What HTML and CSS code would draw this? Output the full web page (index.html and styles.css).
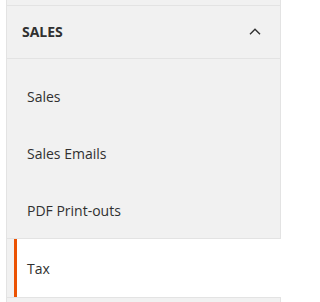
FILE: index.html
```html
<!DOCTYPE html>
<html lang="en">
<head>
<meta charset="utf-8">
<title>Sales nav</title>
<link rel="stylesheet" href="styles.css">
</head>
<body>
<nav class="nav">
  <div class="prev"></div>
  <div class="section-title">
    <span class="title-text">SALES</span>
    <svg class="chevron" width="12" height="7" viewBox="0 0 12 7" aria-hidden="true"><polyline points="1,6.2 6,1.2 11,6.2" fill="none" stroke="#303030" stroke-width="1.4"/></svg>
  </div>
  <ul class="items">
    <li class="item">Sales</li>
    <li class="item">Sales Emails</li>
    <li class="item">PDF Print-outs</li>
    <li class="item active">Tax</li>
  </ul>
  <div class="next"></div>
</nav>
</body>
</html>
```

FILE: styles.css
```css
* { box-sizing: border-box; }
html, body { margin: 0; padding: 0; background: #fff; }
body { font-family: "Open Sans", "Noto Sans", sans-serif; color: #303030; }
.nav {
  margin-left: 6px;
  width: 275px;
  background: #f1f1f1;
  border-left: 1px solid #e3e3e3;
  border-right: 1px solid #e3e3e3;
}
.prev { height: 5px; }
.section-title {
  height: 54px;
  border-top: 1px solid #e3e3e3;
  border-bottom: 1px solid #e3e3e3;
  display: flex;
  align-items: center;
  justify-content: space-between;
  padding: 0 19px 1px 15px;
}
.title-text { font-size: 14px; font-weight: 700; letter-spacing: 0; }
.chevron { display: block; margin-top: -1px; }
.items { list-style: none; margin: 0; padding: 9px 0 0; }
.item {
  height: 57px;
  display: flex;
  align-items: center;
  margin-left: 7px;
  padding-left: 10px;
  border-left: 3px solid transparent;
  font-size: 14px;
}
.item.active {
  height: 58px;
  background: #fff;
  border-left-color: #eb5202;
  margin-right: -11px;
  position: relative;
}
.item.active::before,
.item.active::after {
  content: "";
  position: absolute;
  left: -11px;
  right: 10px;
  height: 1px;
  background: #e3e3e3;
}
.item.active::before { top: -1px; }
.item.active::after { bottom: -1px; }
.next { height: 6px; }
```
